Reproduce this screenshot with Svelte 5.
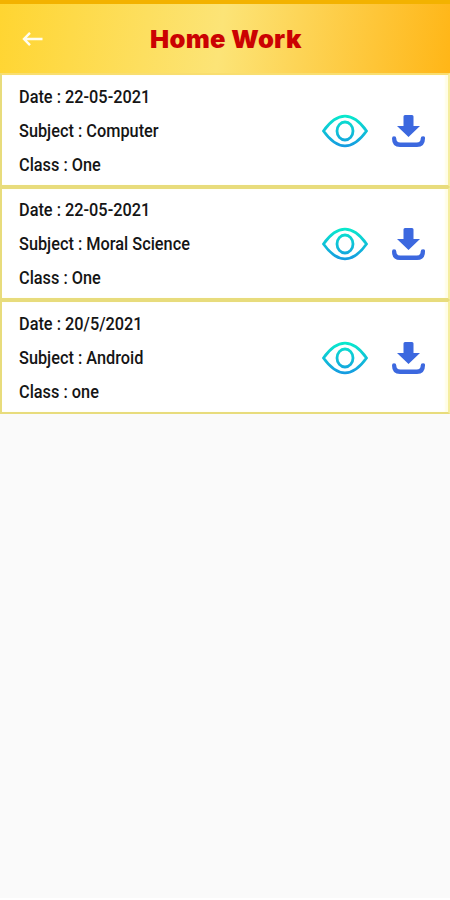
<script>
	const homework = [
		{ date: '22-05-2021', subject: 'Computer', className: 'One' },
		{ date: '22-05-2021', subject: 'Moral Science', className: 'One' },
		{ date: '20/5/2021', subject: 'Android', className: 'one' }
	];
</script>

<div class="screen">
	<header>
		<button class="back" aria-label="Back">
			<svg width="22" height="16" viewBox="0 0 22 16">
				<path d="M20.500 8H2M8 1.800L2 8l6 6.200" />
			</svg>
		</button>
		<h1><span>Home Work</span></h1>
	</header>

	<main>
		{#each homework as item}
			<article>
				<div class="info">
					<p><span>Date : {item.date}</span></p>
					<p><span>Subject : {item.subject}</span></p>
					<p><span>Class : {item.className}</span></p>
				</div>
				<button class="view" aria-label="View">
					<svg width="46" height="34" viewBox="0 0 46 34">
						<defs>
							<linearGradient id="eye" x1="0" y1="0" x2="0" y2="34" gradientUnits="userSpaceOnUse">
								<stop offset="0" stop-color="#08edcb" />
								<stop offset="1" stop-color="#1697e2" />
							</linearGradient>
						</defs>
						<path d="M1.500 17C7.500 8.500 14.500 2.200 23 2.200s15.500 6.300 21.500 14.800C38.500 25.500 31.500 31.800 23 31.800S7.500 25.500 1.500 17Z" />
						<ellipse cx="23" cy="17" rx="8" ry="9" />
					</svg>
				</button>
				<button class="download" aria-label="Download">
					<svg width="33" height="32" viewBox="0 0 33 32">
						<path d="M13 0h7q1.500 0 1.500 1.500V11H28L16.500 22 5 11h6.500V1.500Q11.500 0 13 0Z" />
						<path d="M2 21.200q2.300 0 2.300 2.300 0 4 4 4h16.400q4 0 4-4 0-2.300 2.300-2.300t2 2.300q0 8.500-8 8.500H8q-8 0-8-8.500 0-2.300 2-2.300Z" />
					</svg>
				</button>
			</article>
		{/each}
	</main>
</div>

<style>
	:global(body) {
		background: #fff;
	}

	.screen {
		height: 898px;
		background: #fafafa;
		font-family: Roboto, sans-serif;
	}

	header {
		box-sizing: border-box;
		display: flex;
		align-items: center;
		height: 74px;
		padding: 2px 22px 0;
		border-top: 4px solid #f3b200;
		background: linear-gradient(97deg, #ffd531 0%, #fce477 49%, #ffb617 100%);
	}

	button {
		display: flex;
		padding: 0;
		border: 0;
		background: none;
	}

	.back {
		width: 22px;
		margin-top: -3px;
	}

	.back path {
		fill: none;
		stroke: #fffdf0;
		stroke-width: 2.4;
	}

	h1 {
		flex: 1;
		margin: 0 21px 0 0;
		padding-bottom: 3px;
		color: #cb0202;
		font-family: Inter, sans-serif;
		font-size: 24.5px;
		font-weight: 900;
		line-height: 30px;
		text-align: center;
		white-space: nowrap;
	}

	h1 span {
		display: inline-block;
		letter-spacing: 0.3px;
		transform: scaleX(1.04);
	}

	main {
		margin-top: -1px;
	}

	article {
		box-sizing: border-box;
		display: flex;
		align-items: center;
		height: 113.67px;
		padding: 2px 23px 0 17px;
		border: 2px solid #e8dc7c;
		border-right-color: #f5eda0;
		background: #fff;
		box-shadow: inset -3px 0 2px #fffde4;
	}

	article:first-child {
		border-top-color: #f9de70;
	}

	.info {
		flex: 1;
	}

	p {
		margin: 0;
		color: #151515;
		font-size: 17.5px;
		font-weight: 500;
		line-height: 34px;
		white-space: nowrap;
	}

	p span {
		display: inline-block;
		transform: scaleX(0.932);
		transform-origin: left;
	}

	.view path,
	.view ellipse {
		fill: none;
		stroke: url(#eye);
		stroke-width: 2.8;
	}

	.download {
		margin-left: 24px;
	}

	.download path {
		fill: #3c68df;
	}
</style>
